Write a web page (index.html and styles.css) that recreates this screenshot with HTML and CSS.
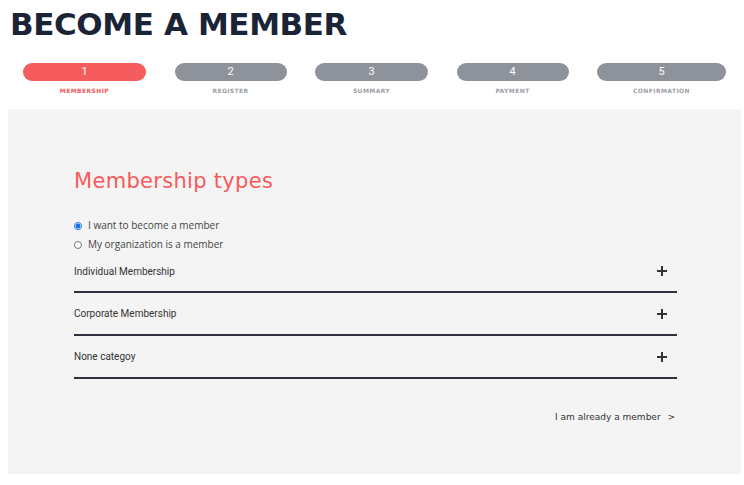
FILE: index.html
```html
<!DOCTYPE html>
<html>
<head>
<meta charset="utf-8">
<link rel="stylesheet" href="styles.css">
</head>
<body>
<h1 class="title">BECOME A MEMBER</h1>
<div class="steps">
  <div class="step active"><div class="pill">1</div><div class="label">MEMBERSHIP</div></div>
  <div class="step"><div class="pill">2</div><div class="label">REGISTER</div></div>
  <div class="step"><div class="pill">3</div><div class="label">SUMMARY</div></div>
  <div class="step"><div class="pill">4</div><div class="label">PAYMENT</div></div>
  <div class="step"><div class="pill">5</div><div class="label">CONFIRMATION</div></div>
</div>
<div class="panel">
  <h2 class="section-title">Membership types</h2>
  <div class="radios">
    <label class="radio"><span class="dot checked"></span>I want to become a member</label>
    <label class="radio"><span class="dot"></span>My organization is a member</label>
  </div>
  <div class="accordion">
    <div class="item"><span>Individual Membership</span><span class="plus"></span></div>
    <div class="item"><span>Corporate Membership</span><span class="plus"></span></div>
    <div class="item"><span>None categoy</span><span class="plus"></span></div>
  </div>
  <div class="already">I am already a member <span class="chev">&gt;</span></div>
</div>
</body>
</html>
```
FILE: styles.css
```css
html, body { margin: 0; padding: 0; background: #fff; }
body { width: 744px; height: 485px; overflow: hidden; font-family: "DejaVu Sans", sans-serif; }

.title {
  margin: 0;
  padding: 4px 0 0 10px;
  height: 40px;
  line-height: 40px;
  font-size: 31px;
  font-weight: 700;
  color: #1b2437;
  letter-spacing: -0.4px;
}

.steps {
  display: grid;
  grid-template-columns: 123px 112px 113px 112px 129px;
  column-gap: 28.5px;
  padding: 19px 0 0 23px;
  height: 46px;
}
.step { display: flex; flex-direction: column; align-items: center; }
.pill {
  width: 100%;
  height: 18px;
  border-radius: 9px;
  background: #8e939b;
  color: #fff;
  font-family: "Roboto", sans-serif;
  font-size: 11px;
  line-height: 18px;
  text-align: center;
}
.label {
  margin-top: 6px;
  font-family: "DejaVu Sans", sans-serif;
  font-weight: 700;
  font-size: 6px;
  letter-spacing: 0.4px;
  color: #9a9ea5;
}
.step.active .pill { background: #f65c5d; }
.step.active .label { color: #f2595b; }

.panel {
  margin: 0 3px 0 8px;
  height: 365px;
  background: #f4f4f4;
  padding: 0 64px 0 66px;
  box-sizing: border-box;
  overflow: hidden;
}
.section-title {
  margin: 0;
  padding-top: 58px;
  font-family: "DejaVu Sans", sans-serif;
  font-weight: 400;
  font-size: 21px;
  line-height: 28px;
  letter-spacing: 0.3px;
  color: #f65a5b;
}
.radios { display: flex; flex-direction: column; gap: 4px; margin-top: 23px; }
.radio {
  display: flex;
  align-items: center;
  font-family: "Open Sans", sans-serif;
  font-size: 10px;
  line-height: 15px;
  color: #444;
}
.dot {
  width: 6px; height: 6px;
  border: 1px solid #767676;
  border-radius: 50%;
  background: #fff;
  margin-right: 6px;
  box-sizing: content-box;
}
.dot.checked {
  border-color: #1a73e8;
  background: radial-gradient(circle, #1a73e8 0 2.2px, #fff 2.7px);
}

.accordion { margin-top: -1px; }
.item {
  display: flex;
  justify-content: space-between;
  align-items: center;
  height: 41px;
  border-bottom: 2px solid #2d3142;
  font-family: "Roboto", sans-serif;
  font-size: 10px;
  color: #333;
  padding-right: 10px;
}
.item:first-child { height: 40px; }
.plus { position: relative; width: 10px; height: 10px; }
.plus::before, .plus::after {
  content: ""; position: absolute; background: #333;
}
.plus::before { left: 0; top: 4px; width: 10px; height: 2px; }
.plus::after { left: 4px; top: 0; width: 2px; height: 10px; }

.already {
  margin-top: 33px;
  text-align: right;
  padding-right: 2px;
  font-family: "DejaVu Sans", sans-serif;
  font-size: 9px;
  color: #333;
}
.chev { margin-left: 4px; }
```
